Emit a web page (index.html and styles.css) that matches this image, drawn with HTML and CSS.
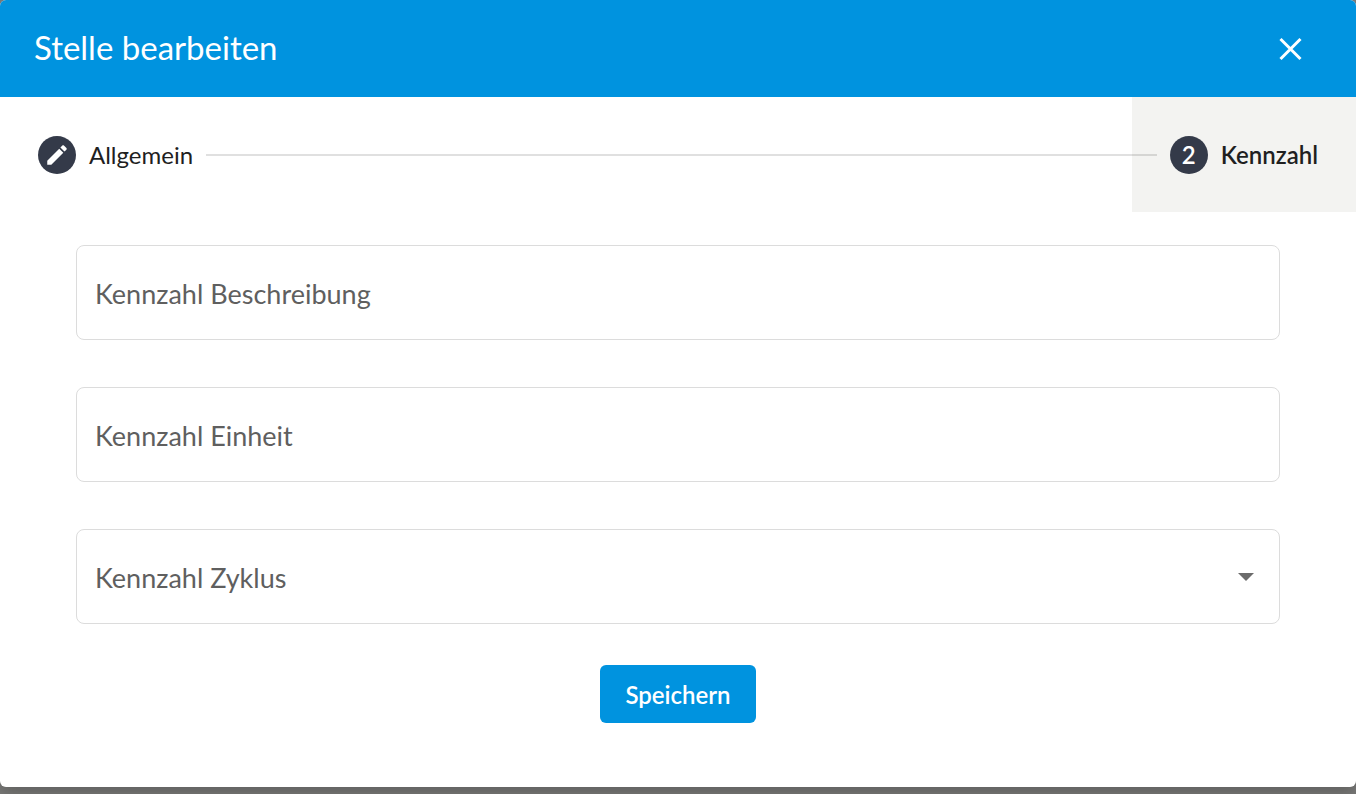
FILE: index.html
```html
<!doctype html>
<html lang="de">
    <head>
        <meta charset="utf-8">
        <meta name="viewport" content="width=device-width, initial-scale=1">
        <title>Stelle bearbeiten</title>
        <link rel="stylesheet" href="styles.css">
    </head>
    <body>
        <div class="dialog" role="dialog" aria-labelledby="dialog-title">
            <header class="header">
                <h1 class="title" id="dialog-title">Stelle bearbeiten</h1>
                <button class="close" type="button" aria-label="Schließen">
                    <svg width="24" height="24" viewBox="0 0 24 24">
                        <path d="M1.500 2L21.500 22M21.500 2L1.500 22" fill="none" stroke="currentColor" stroke-width="3"/>
                    </svg>
                </button>
            </header>
            <nav class="stepper">
                <button class="step" type="button">
                    <span class="step-icon">
                        <svg width="26" height="26" viewBox="0 0 24 24">
                            <path fill="currentColor" d="M3 17.250V21h3.750L17.810 9.940l-3.750-3.750L3 17.250zM20.710 7.040c.39-.39.39-1.020 0-1.410l-2.340-2.340c-.39-.39-1.020-.39-1.410 0l-1.830 1.830 3.750 3.750 1.830-1.830z"/>
                        </svg>
                    </span>
                    <span>Allgemein</span>
                </button>
                <div class="line"></div>
                <button class="step active" type="button" aria-current="step">
                    <span class="step-icon">2</span>
                    <span>Kennzahl</span>
                </button>
            </nav>
            <form class="form">
                <div class="field">
                    <input id="beschreibung" type="text">
                    <label for="beschreibung">Kennzahl Beschreibung</label>
                </div>
                <div class="field">
                    <input id="einheit" type="text">
                    <label for="einheit">Kennzahl Einheit</label>
                </div>
                <div class="field">
                    <select id="zyklus">
                        <option value=""></option>
                    </select>
                    <label for="zyklus">Kennzahl Zyklus</label>
                    <svg class="arrow" width="16" height="8" viewBox="0 0 16 8">
                        <path d="M0 0h16L8 8z" fill="currentColor"/>
                    </svg>
                </div>
                <button class="save" type="button">Speichern</button>
            </form>
        </div>
    </body>
</html>
```

FILE: styles.css
```css
*{
    box-sizing: border-box;
}
body{
    margin: 0;
    min-height: 100vh;
    padding-bottom: 7px;
    display: flex;
    background: #7b7b79;
    font-family: Lato, "Open Sans", sans-serif;
}
button, input, select{
    font-family: inherit;
}
button{
    border: 0;
    cursor: pointer;
}
.dialog{
    flex: 1;
    background: #fff;
    border-radius: 6px;
    overflow: hidden;
    box-shadow: 0 8px 16px rgba(0, 0, 0, 0.2);
}
.header{
    display: flex;
    align-items: center;
    justify-content: space-between;
    padding: 27px 47px 26px 34px;
    background: #0093df;
    color: #fff;
}
.title{
    margin: 0;
    padding-bottom: 4px;
    font-size: 33px;
    font-weight: 400;
    line-height: 40px;
}
.close{
    display: flex;
    padding: 6px;
    background: none;
    color: #fff;
}
.stepper{
    display: flex;
    align-items: center;
}
.step{
    display: flex;
    align-items: center;
    gap: 13px;
    height: 115px;
    padding: 0 38px;
    background: none;
    color: #1f1f1f;
    font-size: 24px;
}
.step.active{
    background: #f3f3f1;
    font-weight: 600;
}
.step-icon{
    display: flex;
    align-items: center;
    justify-content: center;
    width: 38px;
    height: 38px;
    border-radius: 50%;
    background: #343a49;
    color: #fff;
}
.line{
    position: relative;
    z-index: 1;
    flex: 1;
    height: 2px;
    margin: 0 -25px;
    background: rgba(0, 0, 0, 0.12);
}
.form{
    display: flex;
    flex-direction: column;
    gap: 47px;
    padding: 33px 76px 64px;
}
.field{
    position: relative;
    color: #5f5f5f;
}
.field input,
.field select{
    display: block;
    width: 100%;
    height: 95px;
    padding: 0 19px;
    border: 1px solid #dcdcdc;
    border-radius: 8px;
    background: #fff;
    font-size: 27px;
    appearance: none;
}
.field label{
    position: absolute;
    top: 33px;
    left: 19px;
    font-size: 27px;
    line-height: 32px;
    pointer-events: none;
}
.arrow{
    position: absolute;
    top: 44px;
    right: 26px;
    color: #6b6b6b;
    pointer-events: none;
}
.save{
    align-self: center;
    height: 58px;
    margin-top: -6px;
    padding: 0 25px;
    border-radius: 6px;
    background: #0093df;
    color: #fff;
    font-size: 24px;
    font-weight: 600;
}
```
